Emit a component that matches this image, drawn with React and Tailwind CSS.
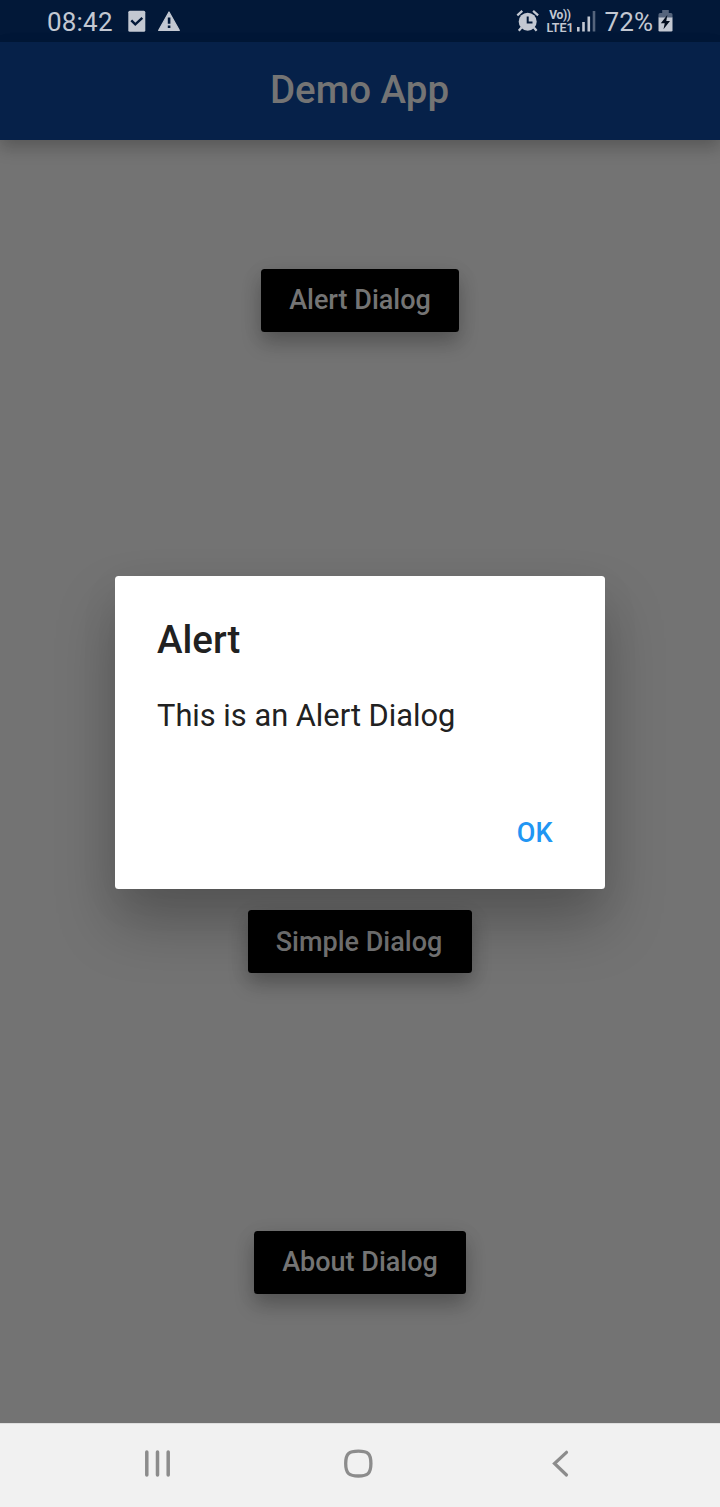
function TaskIcon() {
  return (
    <svg width="18" height="22" viewBox="0 0 18 22" className="block">
      <rect x="0.300" y="0.700" width="17" height="21" rx="1.500" fill="#c3c8d2" />
      <path d="M3.300 10.300l4 4L14.300 7.800" fill="none" stroke="#021838" strokeWidth="2.400" />
    </svg>
  );
}

function WarningIcon() {
  return (
    <svg width="24" height="22" viewBox="0 0 24 22" className="block">
      <path d="M12 2L22.300 20.400H1.700z" fill="#c3c8d2" stroke="#c3c8d2" strokeWidth="1.200" strokeLinejoin="round" />
      <path d="M10.800 7.500h2.600v6.200h-2.600zM10.800 15.500h2.600v2.600h-2.600z" fill="#021838" />
    </svg>
  );
}

function AlarmIcon() {
  return (
    <svg width="24" height="24" viewBox="0 0 24 24" className="block">
      <circle cx="11.700" cy="12.700" r="9" fill="#c3c8d2" />
      <path d="M1.300 6.300L6.300 1.900M22.100 6.300L17.100 1.900M5.500 18.500L2.800 21.700M17.900 18.500l2.700 3.200" fill="none" stroke="#c3c8d2" strokeWidth="2.300" />
      <path d="M11.700 7.500v6h4.800" fill="none" stroke="#021838" strokeWidth="2" />
    </svg>
  );
}

function SignalIcon() {
  return (
    <svg width="19" height="21" viewBox="0 0 19 21" className="block">
      <path d="M0 16h2.600v4.500H0zM5.200 11h2.600v9.500H5.200zM10.500 5.500h2.600v15h-2.600z" fill="#c3c8d2" />
      <path d="M15.700 0h2.600v20.500h-2.600z" fill="#55647c" />
    </svg>
  );
}

function BatteryIcon() {
  return (
    <svg width="15" height="22" viewBox="0 0 15 22" className="block">
      <path d="M4.200 0h6.600v3H13a1.500 1.500 0 0 1 1.500 1.500V8H.5V4.500A1.500 1.500 0 0 1 2 3h2.200z" fill="#55647c" />
      <path d="M.5 7.500h14v12.700a1.300 1.300 0 0 1-1.300 1.300H1.800A1.300 1.300 0 0 1 .5 20.200z" fill="#c3c8d2" />
      <path d="M9.300 5L2.800 13.300h3.900L5.500 19.300l6.500-8.300H8.300z" fill="#020d1d" />
    </svg>
  );
}

function StatusBar() {
  return (
    <div className="flex h-[42px] items-start bg-[#021838] pl-[47px] pr-[47px] text-[#c3c8d2]">
      <span className="mt-[6px] w-[80px] text-[26px] leading-[32px] tracking-[0.2px]">08:42</span>
      <div className="ml-[0.500px] mt-[10px]"><TaskIcon /></div>
      <div className="ml-[11.500px] mt-[10px]"><WarningIcon /></div>
      <div className="ml-auto mt-[9px]"><AlarmIcon /></div>
      <div className="ml-[6px] mt-[9px] flex w-[28px] flex-col items-center whitespace-nowrap font-semibold">
        <div className="text-[12px] font-bold leading-[12px] tracking-[-0.300px]">Vo))</div>
        <div className="text-[12.500px] leading-[13px]">LTE1</div>
      </div>
      <div className="ml-[3px] mt-[11px]"><SignalIcon /></div>
      <span className="ml-[8.500px] mt-[6px] w-[53.500px] whitespace-nowrap text-[26px] leading-[32px] tracking-[0.200px]">72%</span>
      <div className="mt-[10px]"><BatteryIcon /></div>
    </div>
  );
}

const buttonClass =
  "h-[63px] rounded-[3.5px] bg-black text-[27px] font-medium text-[#747474] shadow-[0_11px_20px_rgba(0,0,0,0.23),0_4px_22px_rgba(0,0,0,0.07)]";

export default function App() {
  return (
    <div className="relative flex h-[1507px] w-[720px] flex-col overflow-hidden bg-[#737373] font-[Roboto,sans-serif]">
      <StatusBar />
      <header className="h-[98px] bg-[#062149] pr-[1px] text-center text-[38.5px] font-medium leading-[96px] text-[#747474] shadow-[0_8px_16px_rgba(0,0,0,0.2),0_2px_16px_rgba(0,0,0,0.05)]">
        Demo App
      </header>
      <main className="flex h-[1283px] flex-col items-center justify-around">
        <button className={`${buttonClass} w-[198px] leading-[63px]`}>Alert Dialog</button>
        <div className="h-[63px]" />
        <button className={`${buttonClass} w-[224px] pr-[2px] leading-[64px]`}>Simple Dialog</button>
        <button className={`${buttonClass} w-[212px] leading-[63px]`}>About Dialog</button>
      </main>
      <nav className="flex h-[84px] items-start border-t border-[#dedede] bg-[#f1f1f1] pt-[24px]">
        <svg width="28" height="32" viewBox="0 0 28 32" className="ml-[144px]">
          <path d="M2.800 4v23M13.500 4v23M24.200 4v23" stroke="#8c8c8c" strokeWidth="3.500" strokeLinecap="round" />
        </svg>
        <svg width="32" height="32" viewBox="0 0 32 32" className="ml-[170px]">
          <path d="M16.400 3.200C25.500 3.200 28.900 5.200 28.900 15.500S25.500 28 16.400 28 3.700 25.800 3.700 15.500 7.300 3.200 16.400 3.200z" fill="none" stroke="#8c8c8c" strokeWidth="3.300" />
        </svg>
        <svg width="20" height="32" viewBox="0 0 20 32" className="ml-[176px]">
          <path d="M16.500 4.300L4.500 15.500l12 11.500" fill="none" stroke="#8c8c8c" strokeWidth="3.200" strokeLinecap="round" />
        </svg>
      </nav>
      <div
        role="dialog"
        className="absolute left-[115px] top-[575.5px] h-[313.5px] w-[490px] rounded-[3.5px] bg-white px-[42px] pt-[41px] text-[#212121] shadow-[0_34px_58px_rgba(0,0,0,0.25),0_12px_44px_rgba(0,0,0,0.05)]"
      >
        <h2 className="text-[38.5px] font-medium leading-[45px]">Alert</h2>
        <p className="mt-[36px] text-[30.8px] leading-[36px]">This is an Alert Dialog</p>
        <div className="mt-[83px] flex justify-end pr-[10.5px]">
          <button className="text-[27px] font-medium leading-[32px] text-[#2196f3]">OK</button>
        </div>
      </div>
    </div>
  );
}
